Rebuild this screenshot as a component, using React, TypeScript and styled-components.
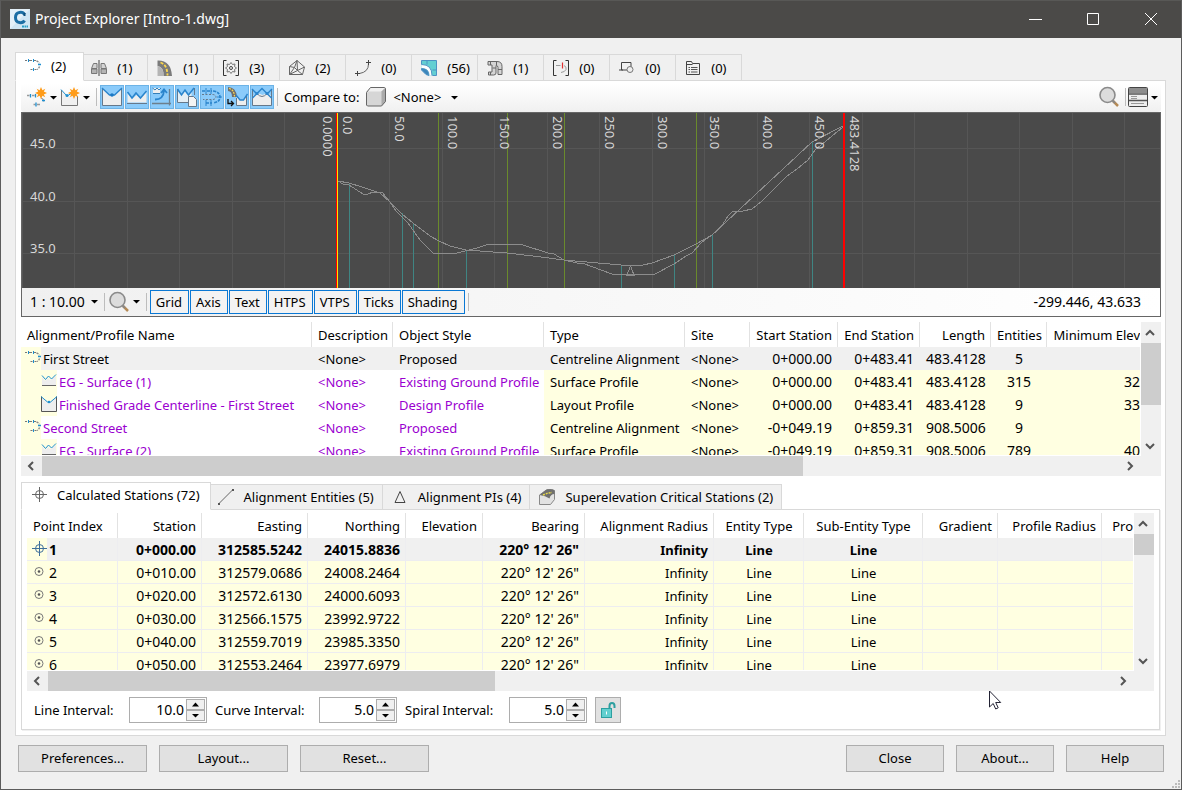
import React from 'react';
import styled, { createGlobalStyle, css } from 'styled-components';

const FONT = '"Noto Sans", "Open Sans", sans-serif';
const LINE = '#d9d9d9';
const FACE = '#f0f0f0';
const LOCKED = '#ffffe1';
const PURPLE = '#9a00d0';
const BLUE = '#1d8fd0';

const Global = createGlobalStyle`
  *, *::before, *::after { box-sizing: border-box; }
  body { margin: 0; font: 13px/18px ${FONT}; color: #000; background: ${FACE}; }
  button, input { font: inherit; color: inherit; }
`;

/* ---------- window frame ---------- */

const Window = styled.div`
  min-height: 100vh;
  display: flex;
  flex-direction: column;
  background: ${FACE};
  border: 1px solid #5c5c5c;
  border-top-color: #585856;
  overflow: hidden;
`;

const TitleBar = styled.header`
  display: flex;
  align-items: center;
  height: 37px;
  padding: 0 1px 1px 9px;
  background: #4b4a48;
  color: #fff;
`;

const Title = styled.h1`
  flex: 1;
  margin: 0 0 0 5px;
  font-size: 14px;
  line-height: 20px;
  font-weight: 400;
`;

const WindowButton = styled.button`
  width: 58px;
  height: 36px;
  padding: 0;
  border: 0;
  background: none;
  color: #fff;
  display: flex;
  align-items: center;
  justify-content: center;
`;

const Body = styled.main`
  flex: 1;
  display: flex;
  flex-direction: column;
  padding: 14px 15px 0 14px;
`;

/* ---------- tabs ---------- */

const TabStrip = styled.div`
  display: flex;
  align-items: flex-end;
  margin-bottom: -1px;
`;

const Tab = styled.button<{ $active?: boolean; $wide?: boolean }>`
  display: flex;
  align-items: center;
  gap: 10px;
  min-width: 66px;
  height: ${p => (p.$wide ? 26 : 27)}px;
  padding: 0 ${p => (p.$wide ? 8 : 6)}px 0 9px;
  border: 1px solid ${LINE};
  border-left-width: 0;
  background: ${FACE};
  white-space: nowrap;
  svg { flex: none; width: 16px; height: 16px; }
  ${p => p.$active && css`
    z-index: 1;
    height: ${p.$wide ? 28 : 29}px;
    margin-right: -2px;
    padding: 0 ${p.$wide ? 10 : 17}px 2px 9px;
    border-left-width: 1px;
    border-bottom-color: #fff;
    background: #fff;
  `}
`;

const Panel = styled.section`
  flex: 1;
  display: flex;
  flex-direction: column;
  padding: 3px 4px 5px 5px;
  border: 1px solid ${LINE};
  background: #fff;
`;

/* ---------- toolbar ---------- */

const Toolbar = styled.div`
  display: flex;
  align-items: center;
  height: 28px;
  padding: 0 0 2px 6px;
  background: linear-gradient(#fff, ${FACE});
  border-radius: 3px;
`;

const ToolButton = styled.button<{ $num?: boolean }>`
  display: flex;
  align-items: center;
  gap: ${p => (p.$num ? 6 : 3)}px;
  height: 24px;
  padding: 0 3px 0 0;
  border: 0;
  background: none;
  font-size: ${p => (p.$num ? 14 : 13)}px;
`;

const Toggle = styled.button<{ $caption?: boolean }>`
  display: flex;
  align-items: center;
  justify-content: center;
  height: 24px;
  width: 24px;
  margin-right: 1px;
  padding: 0;
  border: 1px solid #6db3e6;
  background: #8bcbfa;
  ${p => p.$caption && css`
    width: auto;
    padding: 0 6px 0 5px;
    border-color: #0a78d4;
    background: #f3f3f3;
  `}
`;

const Rule = styled.span<{ $gap?: number }>`
  width: 1px;
  height: 18px;
  margin: 0 ${p => p.$gap ?? 3}px;
  background: #bdbdbd;
`;

const Spacer = styled.span`
  flex: 1;
`;

const CompareLabel = styled.span`
  margin: 0 7px 0 4px;
`;

const Position = styled.span`
  font-size: 14px;
`;

/* ---------- profile chart ---------- */

const ChartBox = styled.div`
  border: 1px solid #666;
  background: #4a4a4a;
  margin-bottom: 5px;
`;

const ChartSvg = styled.svg`
  display: block;
  width: 100%;
  height: 175px;
  text { fill: #d8d8d8; font: 13px ${FONT}; }
`;

const StatusBar = styled.div`
  display: flex;
  align-items: center;
  height: 28px;
  padding: 0 19px 1px 8px;
  background: linear-gradient(90deg, ${FACE}, #fff);
`;

/* ---------- scrolling grids ---------- */

const ScrollFrame = styled.div<{ $grow?: boolean }>`
  display: grid;
  grid-template-columns: minmax(0, 1fr) 20px;
  grid-template-rows: 1fr 20px;
  height: ${p => (p.$grow ? 177 : 154)}px;
  flex: ${p => (p.$grow ? '1 0 auto' : 'none')};
  background: ${FACE};
`;

const Viewport = styled.div`
  overflow: hidden;
  min-height: 0;
  height: 100%;
  contain: size;
  background: #fff;
  border-right: 1px solid #fff;
  border-bottom: 1px solid #fff;
`;

const Bar = styled.div<{ $vertical?: boolean }>`
  display: flex;
  flex-direction: ${p => (p.$vertical ? 'column' : 'row')};
  background: ${FACE};
`;

const BarButton = styled.button`
  flex: 0 0 21px;
  display: flex;
  align-items: center;
  justify-content: center;
  padding: 0 2px 0 0;
  border: 0;
  background: none;
  color: #555;
`;

const Thumb = styled.div<{ $share: number }>`
  flex: ${p => p.$share} 1 0;
  background: #cdcdcd;
`;

const Track = styled.div<{ $share: number }>`
  flex: ${p => p.$share} 1 0;
`;

const Table = styled.table`
  width: 100%;
  table-layout: fixed;
  border-collapse: separate;
  border-spacing: 0;
`;

type Align = 'left' | 'right' | 'center';

const HeadCell = styled.th<{ $align?: Align; $cut?: boolean }>`
  height: 25px;
  padding: ${p => (p.$cut ? '0' : '0 5px 0 6px')};
  border-right: 1px solid #e2e2e2;
  text-align: ${p => p.$align ?? 'left'};
  font-weight: 400;
  white-space: nowrap;
  overflow: hidden;
  &:last-child { border-right: 0; }
`;

const Cell = styled.td<{ $align?: Align; $locked?: boolean; $purple?: boolean; $cut?: boolean; $num?: boolean }>`
  height: 23px;
  padding: ${p => (p.$cut ? '0' : '0 6px')};
  text-align: ${p => p.$align ?? 'left'};
  background: ${p => (p.$locked ? LOCKED : '#fff')};
  color: ${p => (p.$purple ? PURPLE : '#000')};
  font-size: ${p => (p.$num ? 14 : 13)}px;
  white-space: nowrap;
  overflow: hidden;
`;

const NameCell = styled(Cell)`
  padding: 0;
`;

const Row = styled.tr<{ $selected?: boolean; $ruled?: boolean }>`
  ${p => p.$ruled && css`
    td {
      border-bottom: 1px solid #ededf0;
      border-right: 1px solid #ededf0;
      padding-right: 5px;
    }
    td:not(:first-child) { padding-top: 2px; }
    td:last-child { border-right: 0; }
  `}
  ${p => p.$selected && css`
    td { background: ${FACE}; color: #000; }
  `}
  ${p => p.$selected && p.$ruled && css`
    td { font-weight: 700; }
  `}
`;

const NameLine = styled.div`
  display: flex;
  align-items: stretch;
  height: 23px;
  line-height: 25px;
`;

const IconSlot = styled.span<{ $child?: boolean }>`
  width: ${p => (p.$child ? 36 : 20)}px;
  margin-right: 2px;
  padding-top: 3px;
  display: flex;
  justify-content: flex-end;
  align-items: flex-start;
  background: ${LOCKED};
`;

const IndexLine = styled.div`
  display: flex;
  height: 22px;
  line-height: 24px;
`;

const IndexSlot = styled.span`
  width: 20px;
  margin-right: 2px;
  display: flex;
  justify-content: center;
  padding: 3px 0 0 3px;
  background: ${LOCKED};
`;

/* ---------- station panel ---------- */

const StationTabs = styled(TabStrip)`
  margin-top: 6px;
`;

const StationPanel = styled.section`
  flex: 1;
  display: flex;
  flex-direction: column;
  margin-right: 1px;
  padding: 3px 5px 0 5px;
  border: 1px solid ${LINE};
  box-shadow: 1px 1px 0 ${FACE};
`;

const Intervals = styled.form`
  display: flex;
  align-items: center;
  height: 38px;
  padding: 0 0 1px 7px;
`;

const IntervalLabel = styled.label<{ $width: number }>`
  width: ${p => p.$width}px;
`;

const Spin = styled.span`
  display: flex;
  width: 78px;
  height: 26px;
  margin-right: 8px;
  padding: 1px;
  border: 1px solid #adadad;
  background: #fff;
`;

const SpinInput = styled.input`
  flex: 1;
  min-width: 0;
  padding: 0 2px 0 0;
  border: 0;
  outline: 0;
  background: none;
  text-align: right;
  font-size: 14px;
  line-height: 20px;
`;

const SpinButtons = styled.span`
  display: flex;
  flex-direction: column;
  width: 19px;
`;

const SpinButton = styled.button`
  flex: 1;
  display: flex;
  align-items: center;
  justify-content: center;
  padding: 0;
  border: 1px solid #adadad;
  background: ${FACE};
`;

const LockButton = styled.button`
  display: flex;
  align-items: center;
  justify-content: center;
  width: 26px;
  height: 26px;
  padding: 0;
  margin-top: 1px;
  border: 1px solid #adadad;
  background: #e1e1e1;
`;

/* ---------- footer ---------- */

const Footer = styled.footer`
  display: flex;
  gap: 12px;
  padding: 9px 2px 17px 3px;
`;

const PushButton = styled.button<{ $narrow?: boolean }>`
  width: ${p => (p.$narrow ? 98 : 129)}px;
  height: 27px;
  padding: 0 0 1px;
  border: 1px solid #adadad;
  background: #e1e1e1;
`;

const Grip = styled.svg`
  position: fixed;
  right: 1px;
  bottom: 1px;
`;

const Pointer = styled.svg`
  position: fixed;
  left: 989px;
  top: 690px;
  pointer-events: none;
`;

/* ---------- icons ---------- */

const Svg = ({ w = 16, h = w, children }: { w?: number; h?: number; children: React.ReactNode }) => (
  <svg width={w} height={h} viewBox={`0 0 ${w} ${h}`} fill="none" aria-hidden="true">{children}</svg>
);

const Caret = () => <Svg w={7} h={5}><path d="M0 1h7L3.500 4.500z" fill="#000" /></Svg>;

const CivilLogo = () => (
  <Svg w={20}>
    <rect width="20" height="20" fill="#e4f0f8" />
    <path d="M0 20L20 0V20z" fill="#cfe5f3" />
    <path d="M14.500 5.500C13 2.500 5.500 2 5.500 8.500s7.500 6 9 3" stroke="#1c6ea4" strokeWidth="3" />
    <path d="M14.500 4V7" stroke="#0f4f7c" strokeWidth="2" />
    <path d="M12 17.500h6" stroke="#2aa0c8" strokeWidth="2" strokeDasharray="2 .500" />
  </Svg>
);

const AlignmentIcon = () => (
  <Svg>
    <path d="M0 2.500h2M4 2.500h3M9 2.500h2" stroke="#777" />
    <path d="M3.500 1v3M8.500 1v3" stroke={BLUE} />
    <path d="M11.500 3q2 .500 2.700 2.200M14.500 8.500q-.500 2-2.500 3" stroke="#888" strokeWidth="1.300" strokeDasharray="2 1" />
    <path d="M13 6.500h3" stroke={BLUE} strokeWidth="1.500" />
    <path d="M5.500 11.500h2M9.500 11.500h2" stroke="#777" />
    <path d="M8.500 10v3" stroke={BLUE} />
  </Svg>
);

const AssemblyIcon = () => (
  <Svg>
    <path d="M8 0v16" stroke="#444" strokeWidth="1" />
    <path d="M.5 8.500l2-5h3.500v5zM15.500 8.500l-2-5H10v5z" fill="#d4d4d4" stroke="#777" />
    <path d="M.5 9h5.500v4.500h-5.500zM10 9h5.500v4.500H10z" fill="#b4b4b4" stroke="#777" />
  </Svg>
);

const RoadIcon = () => (
  <Svg>
    <path d="M.5.500Q14 0 15 16H6.500Q7 7 .5 6z" fill="#7b7b7b" />
    <path d="M.5 1v15h6Q7 7 .5 6" fill="#b5b5b5" />
    <path d="M3.500 2.500q4 1.500 5.500 5 1.500 4 1.500 8" stroke="#ffd94a" strokeWidth="1.800" strokeDasharray="3 1.500" />
  </Svg>
);

const GearBracketIcon = () => (
  <Svg>
    <path d="M3.500.500h-3v15h3M12.500.500h3v15h-3" stroke="#333" />
    <path d="M8 2.500l1.500 2 2.500-.500-.500 2.500 2 1.500-2 1.500.500 2.500-2.500-.500L8 13.500l-1.500-2-2.500.500.500-2.500-2-1.500 2-1.500L4 4l2.500.500z" stroke="#777" />
    <circle cx="8" cy="8" r="1.500" stroke="#444" />
  </Svg>
);

const SurfaceIcon = () => (
  <Svg>
    <path d="M8 .500L.500 6.500v8h13l2-7.500zM8 .500L5.500 7.500l3 3 5 4M5.500 7.500l-5 7M8.500 10.500l-8 4M8.500 10.500l7-3.500M8 .500l.500 10M5.500 7.500l-5-1" stroke="#666" />
  </Svg>
);

const FeatureLineIcon = () => (
  <Svg>
    <path d="M4.500 13.500Q13.500 12 13.500 4" stroke="#666" />
    <path d="M0 13.500h5M2.500 11v5M11 2.500h5M13.500 0v5" stroke="#444" />
  </Svg>
);

const PipeCornerIcon = () => (
  <Svg>
    <path d="M.5.500h15v15H8.500L.5 8z" fill="#63cfd2" />
    <path d="M.5 4.500V.500h15v15h-4" stroke="#4d93c4" />
    <path d="M.5 4.500q10.500 0 10.500 11H8q0-7-7.500-7z" fill="#fff" />
    <path d="M.5 4.500q10.500 0 10.500 11" stroke="#4d93c4" />
    <path d="M.5 8.500q7.500 0 7.500 7l-3-1-4.500-4.500z" fill="#3d86bb" stroke="#4d93c4" />
    <path d="M6 1v3.500M11.500 10H15" stroke="#4d93c4" />
  </Svg>
);

const PipeNetworkIcon = () => (
  <Svg>
    <path d="M1 1.500h9q5 0 5 5v8h-4v-7q0-2-2-2V13q0 2-2.500 2H1.500v-3H5V5H1z" fill="#d5d5d5" stroke="#666" />
    <path d="M3.500 1.500V5M9.500 1.500V5M11 9.500h4M5.500 8H9M3.500 12v3" stroke="#666" />
  </Svg>
);

const BracketBreakIcon = () => (
  <Svg>
    <path d="M3.500.500h-3v15h3M12.500.500h3v15h-3" stroke="#333" />
    <path d="M3 5.500h4.500M11 5.500q3 1.500 2 4t-5 3" stroke="#999" />
    <path d="M9.500 2.500v6" stroke="#e03030" strokeWidth="1.200" />
  </Svg>
);

const ShapesIcon = () => (
  <Svg>
    <path d="M2.500 2.500h9.500v7.500H2.500z" stroke="#444" />
    <path d="M0 10h4" stroke="#444" />
    <circle cx="11" cy="9.500" r="3" stroke="#777" fill="#eee" />
  </Svg>
);

const FolderListIcon = () => (
  <Svg>
    <path d="M1.500 14.500v-13h5l1 2h7v11z" stroke="#444" />
    <path d="M1.500 4.500h6" stroke="#444" />
    <path d="M3.500 7.500h1.500M6 7.500h6.500M3.500 9.500h1.500M6 9.500h6.500M3.500 12h1.500M6 12h6.500" stroke="#555" />
  </Svg>
);

const SUN = 'M0-6l1.400 3.200 2.900-1.500-1.500 2.900L6 0 2.800 1.400l1.500 2.900-2.900-1.500L0 6l-1.400-3.200-2.900 1.500 1.500-2.900L-6 0l3.200-1.400-1.500-2.900 2.900 1.500z';

const NewAlignmentIcon = () => (
  <Svg w={20}>
    <path d="M0 8.500h2.500M5 8.500h2.500M14 11q3 1 2.500 3.500M6.500 17.500h2M10 17.500h3" stroke="#999" strokeWidth="1.300" />
    <path d="M3.500 7v3.500M8.500 7v3.500M15 13.500h3M9 15.500v4" stroke={BLUE} strokeWidth="1.300" />
    <path d={SUN} transform="translate(14 6)" fill="#ff9c1a" />
  </Svg>
);

const NewProfileIcon = () => (
  <Svg w={20}>
    <path d="M1.500 4l5 4.500h3L16.500 5v13.500h-15z" fill="#f0f0f0" />
    <path d="M1.500 3v15.500h16V9" stroke="#777" />
    <path d="M1 2.500l5.500 6M8 8.500l3-2" stroke={BLUE} />
    <circle cx="7" cy="8.500" r="1.500" fill={BLUE} />
    <path d={SUN} transform="translate(14 6)" fill="#ff9c1a" />
  </Svg>
);

const LayoutProfileIcon = () => (
  <Svg>
    <path d="M.5 1l6 5h3l6-5v14.500h-15z" fill="#eee" />
    <path d="M.5.500v15h15V.500" stroke="#555" />
    <path d="M0 .500l6.500 5.500h3L16 .500" stroke={BLUE} />
    <circle cx="8" cy="6" r="1.300" fill={BLUE} />
  </Svg>
);

const SurfaceProfileIcon = () => (
  <Svg>
    <path d="M1 4l3 4 3-3 2 2 6-4v10H1z" fill="#eee" />
    <path d="M1 2.500l3.500 4 3-3.500 3 3 4.500-4.500" stroke={BLUE} />
    <path d="M1 12.500h14" stroke="#666" />
  </Svg>
);

const LayoutProfileToggle = () => (
  <Svg w={22}>
    <path d="M1.500 3l7 6h5l7-6v16.500h-19z" fill="#eee" />
    <path d="M1.500 2v17.500h19V2" stroke="#66788a" />
    <path d="M1 2l7.500 7h5L21 2" stroke="#2a84cc" strokeWidth="1.300" />
    <circle cx="11" cy="9" r="1.800" fill="#1b78c4" />
  </Svg>
);

const SurfaceProfileToggle = () => (
  <Svg w={22}>
    <path d="M1.500 7l4.500 6 4.500-4 3.500 3 6.500-6v10.500h-19z" fill="#eee" />
    <path d="M1.500 6l4.500 6 4-5 4.500 5 6-7" stroke="#2a84cc" strokeWidth="1.500" />
    <path d="M1 17.500h20" stroke="#66788a" />
  </Svg>
);

const SuperimposedToggle = () => (
  <Svg w={22}>
    <path d="M2 2h7v5H2z" fill="#eee" />
    <path d="M1.500 2l2.500 2 2-2 2 2 2-2M2 7.500h7" stroke="#357fb8" />
    <path d="M18.500 3v16.500M1 17.500h19" stroke="#6d7f8d" strokeWidth="1.300" />
    <path d="M4 13.500q8.500 0 9-9M10 7l3-3.500L16 7" stroke="#2a84cc" strokeWidth="1.800" />
  </Svg>
);

const ProfileSheetToggle = () => (
  <Svg w={22}>
    <path d="M1.500 5l4 4 3-4 3 4 4-4v11.500h-14z" fill="#e4eef5" />
    <path d="M1.500 3v13.500H12M18.500 2v7" stroke="#66788a" />
    <path d="M1.500 3l4 6 3.500-5 3.500 5L18 2" stroke="#2a84cc" strokeWidth="1.500" />
    <path d="M12.500 10.500h5l3 3v7h-8z" fill="#f4f4f4" stroke="#66788a" />
  </Svg>
);

const StationsToggle = () => (
  <Svg w={22}>
    <path d="M1 5h4M6 5h5M12 5q7 1 7 6t-7 6M5 17h6" stroke="#2a84cc" strokeWidth="1.600" strokeDasharray="3 1" />
    <path d="M1 8.500h11q3 .500 3 2.500t-3 2.500H2" stroke="#66788a" strokeDasharray="2 1.500" />
    <path d="M5 2v6M10 2v6M5 14v6M10 14v6M16 11h5" stroke="#2a84cc" />
  </Svg>
);

const CorridorToggle = () => (
  <Svg w={22}>
    <path d="M2 1q8 0 9 10H6Q6 5 2 5z" fill="#6e6e6e" />
    <path d="M3 2.500q5 1 5.500 8" stroke="#ffd94a" strokeWidth="1.200" strokeDasharray="2 1" />
    <path d="M10.500 11l4 3h3l3-4v9.500h-10z" fill="#eee" />
    <path d="M10.500 12v7.500h10V9" stroke="#66788a" />
    <path d="M10 9l4 5h3.500l4-6" stroke="#2a84cc" strokeWidth="1.400" />
    <path d="M2 13v4.500h5M5 15l2.500 2.500L5 20" stroke="#111" strokeWidth="1.300" />
  </Svg>
);

const VerticalToggle = () => (
  <Svg w={22}>
    <path d="M1.500 10l5-3 5 2 5-2 4 3v9.500h-19z" fill="#eee" />
    <path d="M1.500 3v16.500h19V3" stroke="#66788a" />
    <path d="M1 3l5 5M21 3l-5 5M1.500 12L11 2.500 20.500 12" stroke="#2a84cc" strokeWidth="1.400" />
    <path d="M6 7.500q5 6 10 0" stroke="#66788a" />
    <circle cx="6" cy="7.500" r="1.500" fill="#2a84cc" /><circle cx="16" cy="7.500" r="1.500" fill="#2a84cc" />
  </Svg>
);

const CubeIcon = () => (
  <Svg w={20}>
    <path d="M.5 4.500l4-4h15v14l-4 4.500H.500z" fill="#d6d6d6" />
    <path d="M.5 4.500l4-4h15l-4 4z" fill="#f0f0f0" />
    <path d="M15.500 4.500l4-4v14l-4 4.500z" fill="#aaa" />
    <path d="M.5 5.500l4-5h14l1 1v13l-4 4.500H1.500l-1-1z" stroke="#666" />
  </Svg>
);

const Magnifier = () => (
  <Svg w={22}>
    <path d="M15 15l5 5" stroke="#b58a55" strokeWidth="2.500" />
    <path d="M14 14l3 3" stroke="#888" strokeWidth="2" />
    <circle cx="9.500" cy="9" r="7.500" fill="#dcdcdc" stroke="#8a8a8a" strokeWidth="1.600" />
  </Svg>
);

const PanelIcon = () => (
  <Svg w={20}>
    <rect x=".5" y=".5" width="19" height="19" rx="1" fill="#eee" stroke="#444" />
    <path d="M1 1h18v5H1z" fill="#8d8d8d" />
    <path d="M1 7h18M1 13.500h18" stroke="#555" strokeWidth="1.600" />
    <path d="M3 9.500h6M3 11.500h6M3 16.500h13" stroke="#999" />
  </Svg>
);

const Crosshair = ({ tint = '#666' }: { tint?: string }) => (
  <Svg>
    <circle cx="8.500" cy="7.500" r="4" stroke={tint} />
    <path d="M8.500 0v15M1 7.500h15" stroke={tint} />
  </Svg>
);

const PointIcon = () => (
  <Svg>
    <circle cx="8" cy="7.500" r="4" stroke="#777" />
    <circle cx="8" cy="7.500" r="1.300" fill="#555" />
  </Svg>
);

const LineIcon = () => (
  <Svg>
    <path d="M1 14.500L14.500 1" stroke="#666" />
    <path d="M0 14h2v2H0zM14 0h2v2h-2z" fill="#555" />
  </Svg>
);

const TriangleIcon = () => <Svg><path d="M8 2.500l5 11H3z" stroke="#444" /></Svg>;

const SuperelevationIcon = () => (
  <Svg>
    <path d="M.5 6L8 .500q5-.500 7.500 1v9l-4 5H.500z" fill="#e2e2e2" stroke="#888" />
    <path d="M.5 6L7 1q6-1.500 8.500.500v3.500q-4 0-5 4.500-4-3-10-3.500z" fill="#6f6f6f" />
    <path d="M4 6l5-2 4-.500" stroke="#e6d84a" strokeWidth="1.500" strokeDasharray="2 1" />
  </Svg>
);

const LockIcon = () => (
  <Svg>
    <path d="M9.500 7V4q0-3 2.500-3t2.500 3v2" stroke="#2c9fa0" strokeWidth="2" />
    <rect x="1.500" y="6.500" width="10" height="9" fill="#62cfcf" stroke="#2c9fa0" />
    <path d="M6.500 9.500v3" stroke="#fff" />
  </Svg>
);

const CHEVRONS = {
  up: 'M1 7l4-4 4 4',
  down: 'M1 3l4 4 4-4',
  left: 'M7 1L3 5l4 4',
  right: 'M3 1l4 4-4 4',
};

const Chevron = ({ dir }: { dir: keyof typeof CHEVRONS }) => (
  <Svg w={10}><path d={CHEVRONS[dir]} stroke="currentColor" strokeWidth="2" /></Svg>
);

/* ---------- composite parts ---------- */

const ScrollBar = ({ vertical, thumb, rest }: { vertical?: boolean; thumb: number; rest: number }) => (
  <Bar $vertical={vertical}>
    <BarButton aria-label={vertical ? 'Scroll up' : 'Scroll left'}><Chevron dir={vertical ? 'up' : 'left'} /></BarButton>
    <Thumb $share={thumb} />
    <Track $share={rest} />
    <BarButton aria-label={vertical ? 'Scroll down' : 'Scroll right'}><Chevron dir={vertical ? 'down' : 'right'} /></BarButton>
  </Bar>
);

const SpinBox = ({ id, label, width, value }: { id: string; label: string; width: number; value: string }) => (
  <>
    <IntervalLabel htmlFor={id} $width={width}>{label}</IntervalLabel>
    <Spin>
      <SpinInput id={id} type="text" defaultValue={value} />
      <SpinButtons>
        <SpinButton type="button" aria-label="Increase"><Svg w={7} h={5}><path d="M0 4.500h7L3.500.500z" fill="#000" /></Svg></SpinButton>
        <SpinButton type="button" aria-label="Decrease"><Caret /></SpinButton>
      </SpinButtons>
    </Spin>
  </>
);

const DESIGN = '338,181 349,183 362,187 380,193 390,202 402,214 413,223 430,236 439,241 450,246 466,250 507,253 533,256 564,260 621,265 643,265 652,263 674,255 696,244 712,235 812,142 843,126';
const GROUND = '338,181 343,184 349,185 363,194 368,194 373,192 382,192 390,202 396,211 402,217 408,223 420,240 423,243 433,253 457,253 477,248 489,244 515,244 523,245 548,253 554,254 564,260 577,263 582,263 612,274 655,274 674,264 686,256 692,253 702,242 712,235 721,227 728,216 733,211 743,211 752,209 762,201 787,176 797,169 808,160 815,150 843,127';

const GRID_X = Array.from({ length: 60 }, (_, i) => Math.floor(22 + i * 52.5));
const TICKS: [number, string][] = [
  [323, '0.0000'], [343, '0.0'], [395, '50.0'], [448, '100.0'], [500, '150.0'], [553, '200.0'], [605, '250.0'],
  [658, '300.0'], [710, '350.0'], [763, '400.0'], [815, '450.0'], [850, '483.4128'],
];
const LEVELS: [number, string][] = [[148, '45.0'], [201, '40.0'], [253, '35.0']];
const TANGENTS: [number, number][] = [[349, 183], [402, 213], [413, 223], [466, 250], [621, 265], [674, 255], [712, 235], [812, 142]];

const Chart = () => (
  <ChartSvg role="img" aria-label="Profile view">
    <g transform="translate(-22 -113)" shapeRendering="crispEdges" fill="none">
      {GRID_X.map(x => <path key={x} d={`M${x}.5 113v175`} stroke="#565656" />)}
      {LEVELS.map(([y]) => <path key={y} d={`M22 ${y}.5h3000`} stroke="#565656" />)}
      {[438, 507, 564, 696].map(x => <path key={x} d={`M${x}.5 113v175`} stroke="#6a8a2c" />)}
      {TANGENTS.map(([x, y]) => <path key={x} d={`M${x}.5 ${y}V288`} stroke="#3f8583" />)}
      <polyline points={DESIGN} stroke="#8c8c8c" />
      <polyline points={GROUND} stroke="#8c8c8c" />
      <path d="M630.500 266l-3.500 9h7z" stroke="#8c8c8c" />
      <path d="M336.500 113v175" stroke="#f00" />
      <path d="M337.500 113v175" stroke="#ffe600" />
      <path d="M844 113v175" stroke="#f00" strokeWidth="2" />
      {LEVELS.map(([y, t]) => <text key={t} x="30" y={y}>{t}</text>)}
      {TICKS.map(([x, t]) => <text key={t} transform={`translate(${x} 116) rotate(90)`}>{t}</text>)}
    </g>
  </ChartSvg>
);

/* ---------- data ---------- */

const TABS: [string, string, () => React.ReactElement][] = [
  ['Alignments', '(2)', AlignmentIcon], ['Assemblies', '(1)', AssemblyIcon], ['Corridors', '(1)', RoadIcon],
  ['Point Groups', '(3)', GearBracketIcon], ['Surfaces', '(2)', SurfaceIcon], ['Feature Lines', '(0)', FeatureLineIcon],
  ['Pipes', '(56)', PipeCornerIcon], ['Pipe Networks', '(1)', PipeNetworkIcon], ['Pressure Networks', '(0)', BracketBreakIcon],
  ['Shapes', '(0)', ShapesIcon], ['Object Sets', '(0)', FolderListIcon],
];

const TOGGLES: [string, () => React.ReactElement][] = [
  ['Layout profiles', LayoutProfileToggle], ['Surface profiles', SurfaceProfileToggle],
  ['Superimposed profiles', SuperimposedToggle], ['File profiles', ProfileSheetToggle],
  ['Offset alignments', StationsToggle], ['Corridor profiles', CorridorToggle], ['Vertical points', VerticalToggle],
];

const ALIGN_COLS: [string, number | undefined, Align][] = [
  ['Alignment/Profile Name', 291, 'left'], ['Description', 81, 'left'], ['Object Style', 151, 'left'], ['Type', 141, 'left'],
  ['Site', 65, 'left'], ['Start Station', 88, 'right'], ['End Station', 82, 'right'], ['Length', 71, 'right'],
  ['Entities', 56, 'center'], ['Minimum Elev', undefined, 'right'],
];

const ALIGN_ROWS = [
  ['First Street', 'a', 'Proposed', 'Centreline Alignment', '0+000.00', '0+483.41', '483.4128', '5', ''],
  ['EG - Surface (1)', 's', 'Existing Ground Profile', 'Surface Profile', '0+000.00', '0+483.41', '483.4128', '315', '32'],
  ['Finished Grade Centerline - First Street', 'l', 'Design Profile', 'Layout Profile', '0+000.00', '0+483.41', '483.4128', '9', '33'],
  ['Second Street', 'a', 'Proposed', 'Centreline Alignment', '-0+049.19', '0+859.31', '908.5006', '9', ''],
  ['EG - Surface (2)', 's', 'Existing Ground Profile', 'Surface Profile', '-0+049.19', '0+859.31', '908.5006', '789', '40'],
];

const STATION_COLS: [string, number | undefined, Align][] = [
  ['Point Index', 91, 'left'], ['Station', 84, 'right'], ['Easting', 106, 'right'], ['Northing', 98, 'right'],
  ['Elevation', 77, 'right'], ['Bearing', 102, 'right'], ['Alignment Radius', 129, 'right'], ['Entity Type', 90, 'center'],
  ['Sub-Entity Type', 119, 'center'], ['Gradient', 75, 'right'], ['Profile Radius', 104, 'right'], ['Pro', undefined, 'right'],
];

const STATION_ROWS = [
  ['0+000.00', '312585.5242', '24015.8836'], ['0+010.00', '312579.0686', '24008.2464'], ['0+020.00', '312572.6130', '24000.6093'],
  ['0+030.00', '312566.1575', '23992.9722'], ['0+040.00', '312559.7019', '23985.3350'], ['0+050.00', '312553.2464', '23977.6979'],
];

const Head = ({ cols }: { cols: [string, number | undefined, Align][] }) => (
  <>
    <colgroup>{cols.map(([t, w]) => <col key={t} width={w} />)}</colgroup>
    <thead>
      <tr>{cols.map(([t, w, a]) => <HeadCell key={t} scope="col" $align={a} $cut={w === undefined}>{t}</HeadCell>)}</tr>
    </thead>
  </>
);

export default function App() {
  return (
    <Window>
      <Global />
      <TitleBar>
        <CivilLogo />
        <Title>Project Explorer [Intro-1.dwg]</Title>
        <WindowButton aria-label="Minimize"><Svg w={13}><path d="M0 6.500h13" stroke="#fff" /></Svg></WindowButton>
        <WindowButton aria-label="Maximize"><Svg w={12}><path d="M.5.500h11v11H.500z" stroke="#fff" /></Svg></WindowButton>
        <WindowButton aria-label="Close window"><Svg w={12}><path d="M0 0l12 12M12 0L0 12" stroke="#fff" /></Svg></WindowButton>
      </TitleBar>

      <Body>
        <TabStrip role="tablist">
          {TABS.map(([name, count, Icon], i) => (
            <Tab key={name} role="tab" $active={i === 0} aria-selected={i === 0} title={name}><Icon />{count}</Tab>
          ))}
        </TabStrip>

        <Panel>
          <Toolbar role="toolbar">
            <ToolButton aria-label="New alignment"><NewAlignmentIcon /><Caret /></ToolButton>
            <ToolButton aria-label="New profile"><NewProfileIcon /><Caret /></ToolButton>
            <Rule />
            {TOGGLES.map(([name, Icon]) => <Toggle key={name} aria-label={name} aria-pressed="true"><Icon /></Toggle>)}
            <Rule $gap={2} />
            <CompareLabel>Compare to:</CompareLabel>
            <ToolButton aria-label="Compare to"><CubeIcon /><CompareLabel>&lt;None&gt;</CompareLabel><Caret /></ToolButton>
            <Spacer />
            <ToolButton aria-label="Search"><Magnifier /></ToolButton>
            <Rule $gap={2} />
            <ToolButton aria-label="Panels"><PanelIcon /><Caret /></ToolButton>
          </Toolbar>

          <ChartBox>
            <Chart />
            <StatusBar>
              <ToolButton $num>1 : 10.00<Caret /></ToolButton>
              <Rule />
              <ToolButton aria-label="Zoom"><Magnifier /><Caret /></ToolButton>
              <Rule />
              {['Grid', 'Axis', 'Text', 'HTPS', 'VTPS', 'Ticks', 'Shading'].map(t => (
                <Toggle key={t} $caption aria-pressed="true">{t}</Toggle>
              ))}
              <Rule $gap={2} />
              <Spacer />
              <Position>-299.446, 43.633</Position>
            </StatusBar>
          </ChartBox>

          <ScrollFrame>
            <Viewport>
              <Table>
                <Head cols={ALIGN_COLS} />
                <tbody>
                  {ALIGN_ROWS.map(([name, kind, style, type, start, end, length, count, min], i) => {
                    const own = i > 0;
                    return (
                      <Row key={name} $selected={!own}>
                        <NameCell $purple={own}>
                          <NameLine>
                            <IconSlot $child={kind !== 'a'}>
                              {kind === 'a' ? <AlignmentIcon /> : kind === 's' ? <SurfaceProfileIcon /> : <LayoutProfileIcon />}
                            </IconSlot>
                            {name}
                          </NameLine>
                        </NameCell>
                        <Cell $purple={own}>&lt;None&gt;</Cell>
                        <Cell $purple={own}>{style}</Cell>
                        <Cell $locked>{type}</Cell>
                        <Cell $locked>&lt;None&gt;</Cell>
                        <Cell $locked $num $align="right">{start}</Cell>
                        <Cell $locked $num $align="right">{end}</Cell>
                        <Cell $locked $num $align="right">{length}</Cell>
                        <Cell $locked $num $align="center">{count}</Cell>
                        <Cell $locked $num $align="right" $cut>{min}</Cell>
                      </Row>
                    );
                  })}
                </tbody>
              </Table>
            </Viewport>
            <ScrollBar vertical thumb={61} rest={30} />
            <ScrollBar thumb={760} rest={317} />
          </ScrollFrame>

          <StationTabs role="tablist">
            <Tab role="tab" $active $wide aria-selected="true"><Crosshair />Calculated Stations (72)</Tab>
            <Tab role="tab" $wide><LineIcon />Alignment Entities (5)</Tab>
            <Tab role="tab" $wide><TriangleIcon />Alignment PIs (4)</Tab>
            <Tab role="tab" $wide><SuperelevationIcon />Superelevation Critical Stations (2)</Tab>
          </StationTabs>

          <StationPanel>
            <ScrollFrame $grow>
              <Viewport>
                <Table>
                  <Head cols={STATION_COLS} />
                  <tbody>
                    {STATION_ROWS.map(([station, east, north], i) => (
                      <Row key={station} $ruled $selected={i === 0}>
                        <NameCell $locked $num>
                          <IndexLine>
                            <IndexSlot>{i === 0 ? <Crosshair tint="#3f6f9c" /> : <PointIcon />}</IndexSlot>{i + 1}
                          </IndexLine>
                        </NameCell>
                        <Cell $locked $num $align="right">{station}</Cell>
                        <Cell $locked $num $align="right">{east}</Cell>
                        <Cell $locked $num $align="right">{north}</Cell>
                        <Cell $locked />
                        <Cell $locked $num $align="right">220° 12' 26"</Cell>
                        <Cell $locked $align="right">Infinity</Cell>
                        <Cell $locked $align="center">Line</Cell>
                        <Cell $locked $align="center">Line</Cell>
                        <Cell $locked />
                        <Cell $locked />
                        <Cell $locked />
                      </Row>
                    ))}
                  </tbody>
                </Table>
              </Viewport>
              <ScrollBar vertical thumb={21} rest={94} />
              <ScrollBar thumb={447} rest={617} />
            </ScrollFrame>

            <Intervals>
              <SpinBox id="line" label="Line Interval:" width={95} value="10.0" />
              <SpinBox id="curve" label="Curve Interval:" width={104} value="5.0" />
              <SpinBox id="spiral" label="Spiral Interval:" width={104} value="5.0" />
              <LockButton type="button" aria-label="Unlock"><LockIcon /></LockButton>
            </Intervals>
          </StationPanel>
        </Panel>

        <Footer>
          <PushButton>Preferences...</PushButton>
          <PushButton>Layout...</PushButton>
          <PushButton>Reset...</PushButton>
          <Spacer />
          <PushButton $narrow>Close</PushButton>
          <PushButton $narrow>About...</PushButton>
          <PushButton $narrow>Help</PushButton>
        </Footer>
      </Body>

      <Grip width="10" height="10" aria-hidden="true">
        <path d="M7 1h2v2H7zM4 4h2v2H4zM7 4h2v2H7zM1 7h2v2H1zM4 7h2v2H4zM7 7h2v2H7z" fill="#bbb" />
      </Grip>
      <Pointer width="13" height="20" viewBox="0 0 13 20" aria-hidden="true">
        <path d="M.5 1v16l3.700-3.500 2.500 5.500 2.500-1.200-2.500-5.300h5z" fill="#fff" stroke="#223" />
      </Pointer>
    </Window>
  );
}
